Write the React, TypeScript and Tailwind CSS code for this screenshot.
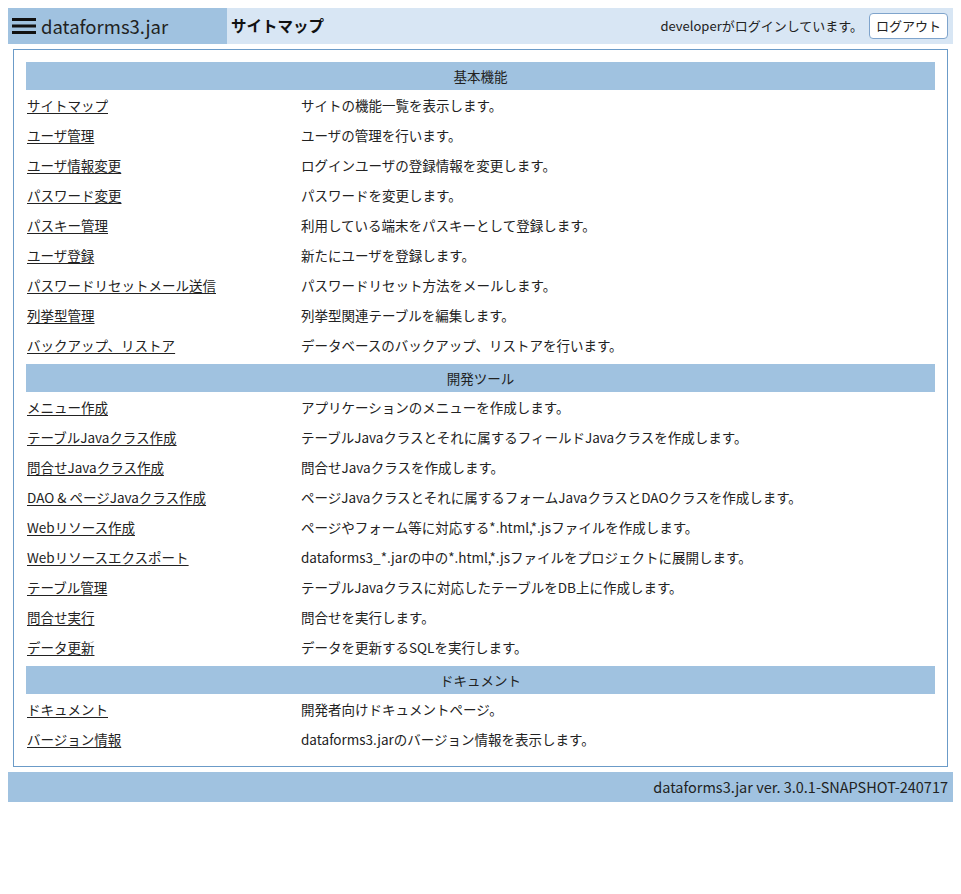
import React from "react";

type Item = { label: string; desc: string };
type Section = { title: string; items: Item[] };

const sections: Section[] = [
  {
    title: "基本機能",
    items: [
      { label: "サイトマップ", desc: "サイトの機能一覧を表示します。" },
      { label: "ユーザ管理", desc: "ユーザの管理を行います。" },
      { label: "ユーザ情報変更", desc: "ログインユーザの登録情報を変更します。" },
      { label: "パスワード変更", desc: "パスワードを変更します。" },
      { label: "パスキー管理", desc: "利用している端末をパスキーとして登録します。" },
      { label: "ユーザ登録", desc: "新たにユーザを登録します。" },
      { label: "パスワードリセットメール送信", desc: "パスワードリセット方法をメールします。" },
      { label: "列挙型管理", desc: "列挙型関連テーブルを編集します。" },
      { label: "バックアップ、リストア", desc: "データベースのバックアップ、リストアを行います。" },
    ],
  },
  {
    title: "開発ツール",
    items: [
      { label: "メニュー作成", desc: "アプリケーションのメニューを作成します。" },
      { label: "テーブルJavaクラス作成", desc: "テーブルJavaクラスとそれに属するフィールドJavaクラスを作成します。" },
      { label: "問合せJavaクラス作成", desc: "問合せJavaクラスを作成します。" },
      { label: "DAO & ページJavaクラス作成", desc: "ページJavaクラスとそれに属するフォームJavaクラスとDAOクラスを作成します。" },
      { label: "Webリソース作成", desc: "ページやフォーム等に対応する*.html,*.jsファイルを作成します。" },
      { label: "Webリソースエクスポート", desc: "dataforms3_*.jarの中の*.html,*.jsファイルをプロジェクトに展開します。" },
      { label: "テーブル管理", desc: "テーブルJavaクラスに対応したテーブルをDB上に作成します。" },
      { label: "問合せ実行", desc: "問合せを実行します。" },
      { label: "データ更新", desc: "データを更新するSQLを実行します。" },
    ],
  },
  {
    title: "ドキュメント",
    items: [
      { label: "ドキュメント", desc: "開発者向けドキュメントページ。" },
      { label: "バージョン情報", desc: "dataforms3.jarのバージョン情報を表示します。" },
    ],
  },
];

export default function App() {
  return (
    <div className="min-h-[894px] bg-white p-2 font-['Noto_Sans_CJK_JP','Noto_Sans',sans-serif] text-[#222]">
      {/* header */}
      <div className="flex h-9 items-stretch">
        <div className="flex w-[219px] items-center bg-[#a0c2e0] pl-1">
          <svg width="24" height="18" viewBox="0 0 24 18" className="mr-[5px]" aria-hidden>
            <rect x="0" y="1" width="24" height="3" fill="#111" />
            <rect x="0" y="7.5" width="24" height="3" fill="#111" />
            <rect x="0" y="14" width="24" height="3" fill="#111" />
          </svg>
          <span className="text-[18.5px] leading-none text-[#222]">dataforms3.jar</span>
        </div>
        <div className="flex flex-1 items-center justify-between bg-[#d8e6f4] pl-1 pr-[5px]">
          <span className="text-[15.5px] font-bold text-[#111]">サイトマップ</span>
          <div className="flex items-center gap-[6px]">
            <span className="text-[13px]">developerがログインしています。</span>
            <button
              type="button"
              className="h-[26px] rounded-[4px] border border-[#7fa4cc] bg-white px-[6px] text-[13px] text-[#222]"
            >
              ログアウト
            </button>
          </div>
        </div>
      </div>

      {/* main box */}
      <div className="mx-[5px] mt-[5px] border border-[#6b9bc8] px-3 pb-3 pt-3">
        {sections.map((s, i) => (
          <div key={s.title} className={i === 0 ? "flex flex-col" : "mt-[4px] flex flex-col"}>
            <div className="flex h-[28px] items-center justify-center bg-[#a0c2e0] text-[13.5px]">
              {s.title}
            </div>
            {s.items.map((it) => (
              <div key={it.label} className="grid h-[30px] grid-cols-[274px_1fr] items-center text-[13.5px]">
                <a href="#" className="pl-[1px] text-[#222] underline underline-offset-2">
                  {it.label}
                </a>
                <span className="pl-[1px]">{it.desc}</span>
              </div>
            ))}
          </div>
        ))}
      </div>

      {/* footer */}
      <div className="mt-[5px] flex h-[30px] items-center justify-end bg-[#a0c2e0] pr-[5px] text-[14.5px]">
        dataforms3.jar ver. 3.0.1-SNAPSHOT-240717
      </div>
    </div>
  );
}
